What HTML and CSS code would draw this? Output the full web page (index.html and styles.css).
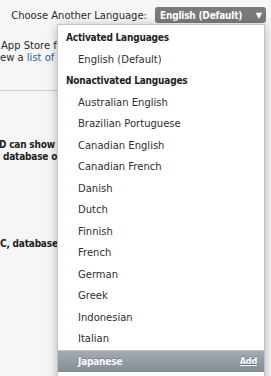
FILE: index.html
```html
<!DOCTYPE html>
<html>
<head>
<meta charset="utf-8">
<link rel="stylesheet" href="styles.css">
</head>
<body>
<div class="page">
  <div class="topbar">
    <span class="label">Choose Another Language:</span>
    <div class="select"><span>English (Default)</span><span class="arrow">▼</span></div>
  </div>
  <div class="bg">
    <p class="intro">App Store for<br><span class="indent">ew a <a class="link">list of the</a></span></p>
    <hr class="rule">
    <p class="bold p1"><span>D can show</span><br><span class="indent2">database of</span></p>
    <p class="bold p2">C, database,</p>
  </div>
  <div class="menu">
    <div class="row head">Activated Languages</div>
    <div class="row">English (Default)</div>
    <div class="row head">Nonactivated Languages</div>
    <div class="row">Australian English</div>
    <div class="row">Brazilian Portuguese</div>
    <div class="row">Canadian English</div>
    <div class="row">Canadian French</div>
    <div class="row">Danish</div>
    <div class="row">Dutch</div>
    <div class="row">Finnish</div>
    <div class="row">French</div>
    <div class="row">German</div>
    <div class="row">Greek</div>
    <div class="row">Indonesian</div>
    <div class="row">Italian</div>
    <div class="row sel"><span>Japanese</span><a class="add">Add</a></div>
  </div>
</div>
</body>
</html>
```
FILE: styles.css
```css
html, body {
  margin: 0;
  padding: 0;
}
body {
  background: #f6f6f6;
  font-family: "DejaVu Sans", Verdana, sans-serif;
  font-size: 10px;
  color: #2b2b2b;
  width: 271px;
  height: 376px;
  overflow: hidden;
}
.page {
  position: relative;
  width: 271px;
  height: 376px;
  overflow: hidden;
}
.topbar {
  display: flex;
  align-items: center;
  justify-content: flex-end;
  gap: 8px;
  height: 16px;
  padding: 7px 5px 0 0;
}
.label {
  color: #2b2b2b;
  font-size: 10px;
}
.select {
  display: flex;
  align-items: center;
  justify-content: space-between;
  width: 102px;
  height: 16px;
  padding: 0 4px 0 5px;
  background: #7a7a7a;
  border-radius: 3px;
  color: #fff;
}
.select span:first-child {
  font-family: "DejaVu Sans Condensed", "Liberation Sans", sans-serif;
  font-weight: bold;
  letter-spacing: -0.2px;
}
.arrow {
  font-size: 8px;
}
.bg {
  width: 57px;
  overflow: hidden;
  white-space: nowrap;
}
.intro {
  margin: 17px 0 0 1px;
  line-height: 11.5px;
}
.indent {
  margin-left: -1px;
}
.link {
  color: #1d5fb7;
}
.rule {
  border: 0;
  border-top: 1px solid #cdcdcd;
  margin: 27px 0 0 0;
  height: 0;
}
.bold {
  font-family: "DejaVu Sans Condensed", "Liberation Sans", sans-serif;
  font-weight: bold;
  letter-spacing: -0.2px;
  color: #222;
}
.p1 {
  margin: 48px 0 0 -1px;
  line-height: 12px;
}
.indent2 {
  margin-left: 4px;
}
.p2 {
  margin: 75px 0 0 0;
}
.menu {
  position: absolute;
  left: 57px;
  top: 24px;
  width: 206px;
  height: 380px;
  background: #fff;
  border: 1px solid #c4c4c4;
  box-shadow: 0 2px 10px rgba(0, 0, 0, 0.28);
  padding-top: 2px;
}
.row {
  height: 21.5px;
  display: flex;
  align-items: center;
  padding-left: 20px;
  color: #2e2e2e;
}
.row.head {
  padding-left: 8px;
  font-family: "DejaVu Sans Condensed", "Liberation Sans", sans-serif;
  font-weight: bold;
  letter-spacing: -0.2px;
  color: #222;
}
.row.sel {
  justify-content: space-between;
  padding-right: 7px;
  background: linear-gradient(#a3abb2, #838d96);
  border-top: 1px solid #b9c0c6;
  box-sizing: border-box;
  height: 22px;
  color: #fff;
  font-family: "DejaVu Sans Condensed", "Liberation Sans", sans-serif;
  font-weight: bold;
  letter-spacing: -0.2px;
  text-shadow: 0 -1px 0 rgba(0, 0, 0, 0.25);
}
.add {
  text-decoration: underline;
  font-size: 9px;
}
```
